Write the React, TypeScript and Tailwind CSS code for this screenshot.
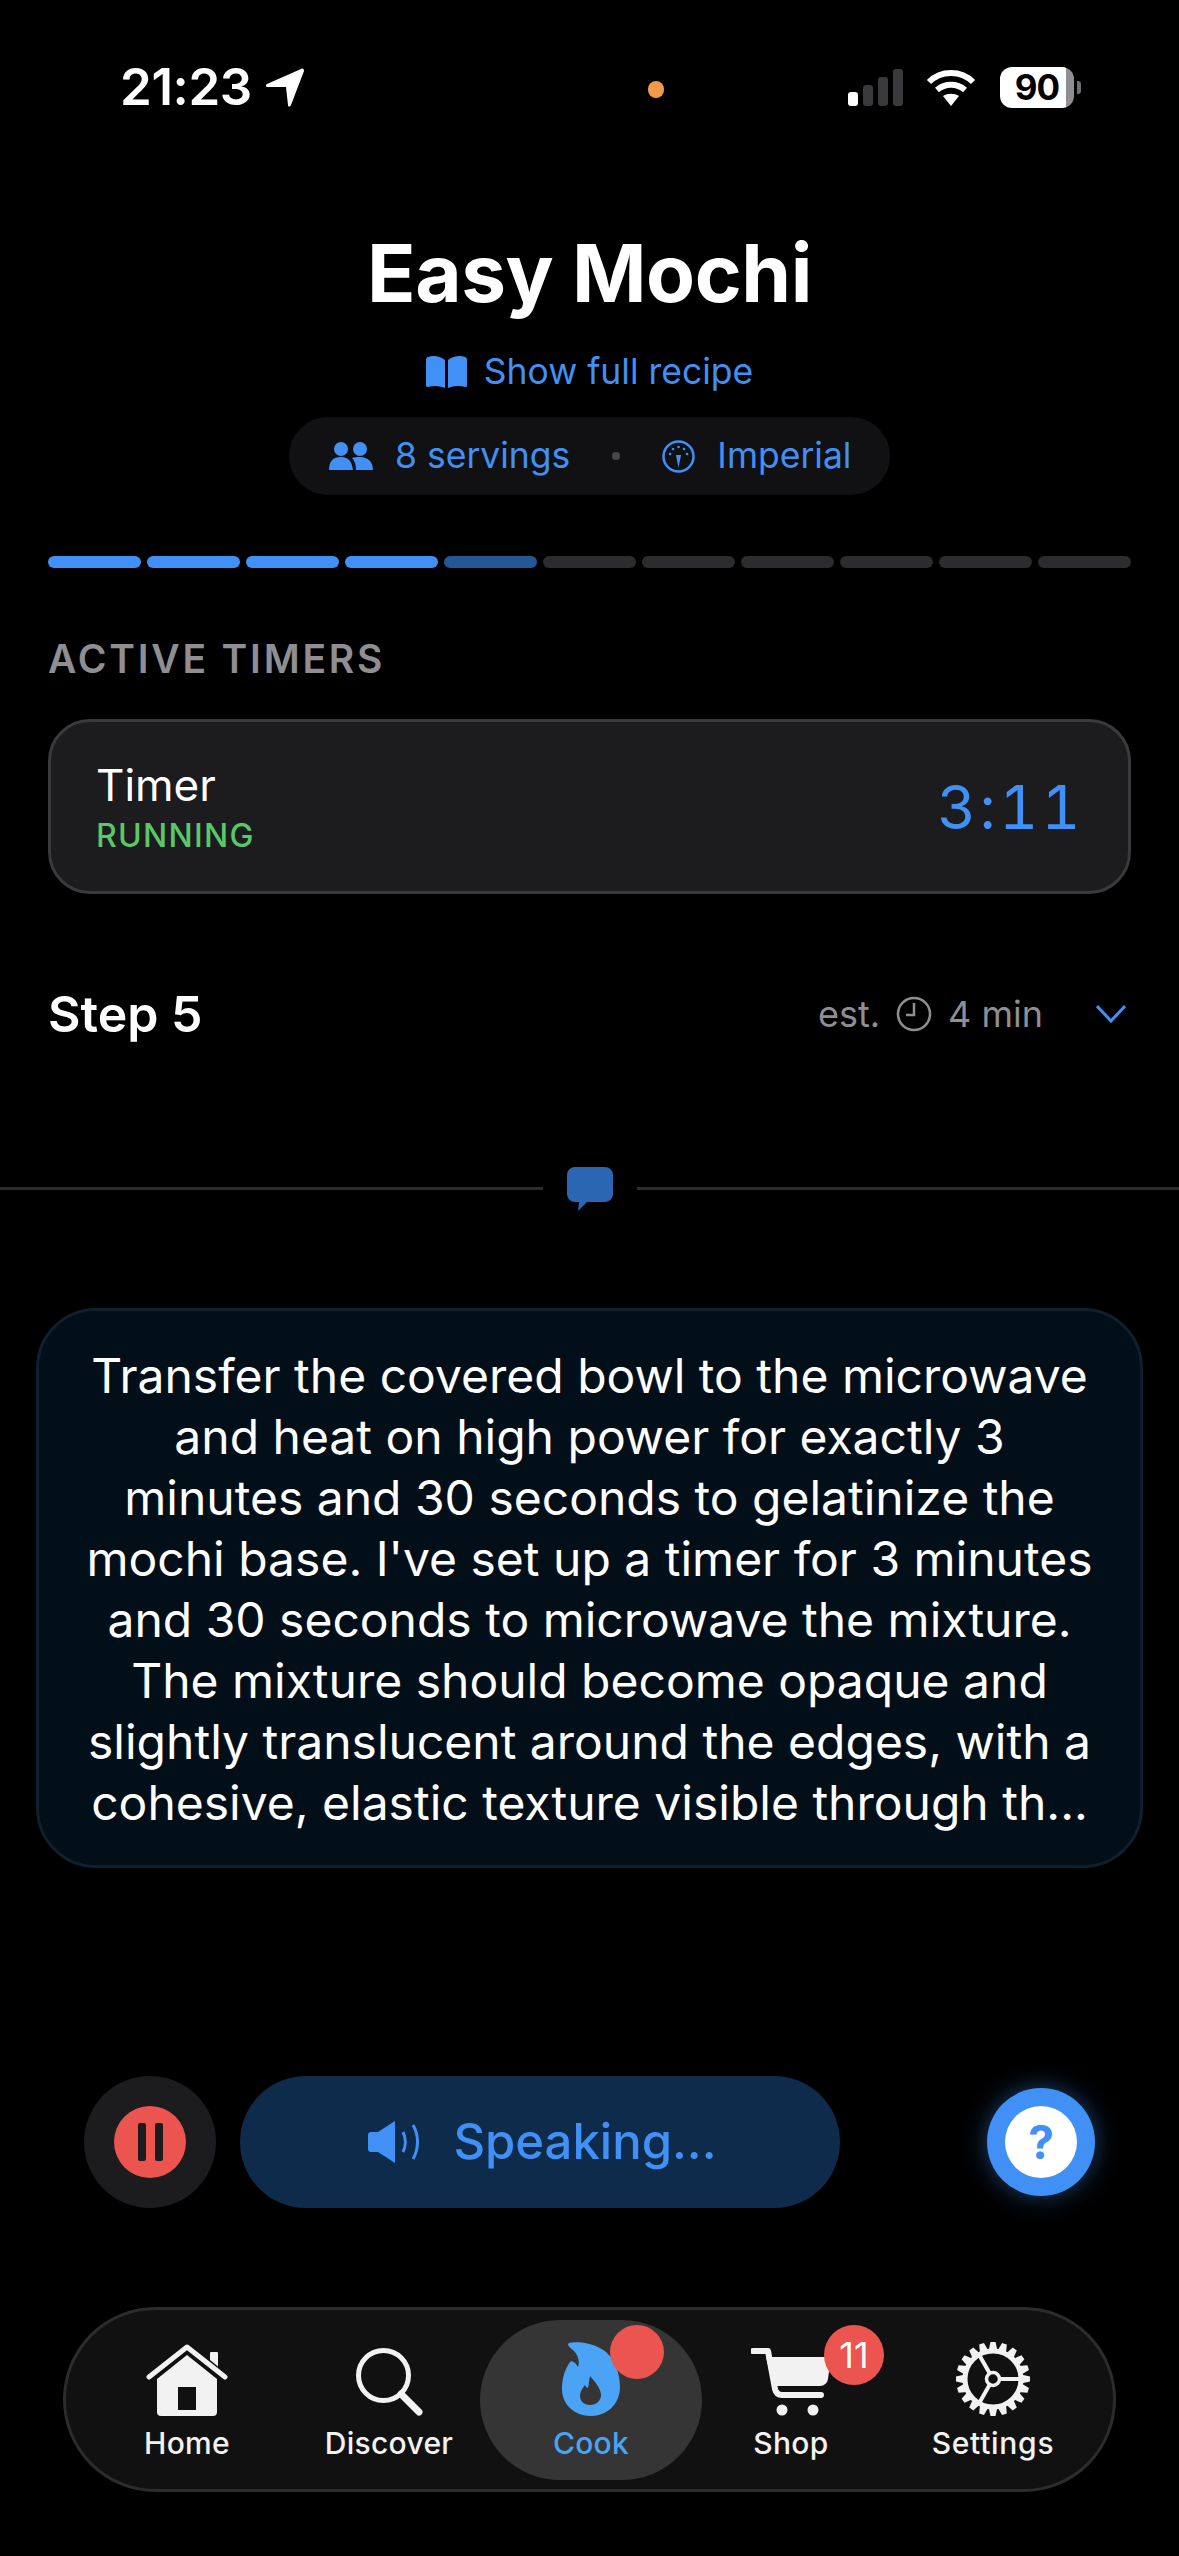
const inter = "font-['Inter',sans-serif]";

const tabs = ["Home", "Discover", "Cook", "Shop", "Settings"];

function HomeIcon() {
  return (
    <svg viewBox="0 0 82 72" className="h-[72px] w-[82px]" fill="#f2f2f2">
      <rect x="64" y="8" width="8" height="19" rx="1" />
      <path
        fillRule="evenodd"
        d="M41 11 71 35v33a4 4 0 0 1-4 4H15a4 4 0 0 1-4-4V35zM32 43v23h18V43z"
      />
      <path d="M3 34 41 3l38 31" fill="none" stroke="#111111" strokeWidth="9" strokeLinecap="round" strokeLinejoin="round" />
      <path d="M3 33 41 3l38 30" fill="none" stroke="#f2f2f2" strokeWidth="5" strokeLinecap="round" strokeLinejoin="round" />
    </svg>
  );
}

function SearchIcon() {
  return (
    <svg viewBox="0 0 67 68" className="h-[68px] w-[67px]" fill="none" stroke="#f2f2f2" strokeLinecap="round">
      <circle cx="27.5" cy="27.5" r="25" strokeWidth="5" />
      <path d="m45 46 18 18" strokeWidth="7" />
    </svg>
  );
}

function FlameIcon() {
  return (
    <svg viewBox="0 0 58 74" className="h-[74px] w-[58px]" fill="#4ba3f5">
      <path
        fillRule="evenodd"
        d="M7 1C14-1 32 0 44 10c9 8 14 22 14 35 0 17-13 29-29 29C12 74 0 62 0 47c0-11 3-20 8-27 2-2 5 0 8 5 2-5 0-12-4-16C9 6 4 3 7 1Zm21 33c-1 4-1 8-2 12-1 0-2-1-3-3-3 4-5 7-5 11 0 5 4 9 10 9s11-4 11-10c0-7-7-14-11-19Z"
      />
    </svg>
  );
}

function CartIcon() {
  return (
    <svg viewBox="0 0 80 68" className="h-[68px] w-[80px]" fill="#f2f2f2">
      <path d="M2 3h15l7 38c1 4 3 6 7 6h39" fill="none" stroke="#f2f2f2" strokeWidth="6" strokeLinecap="round" strokeLinejoin="round" />
      <path d="M15 9h65l-3 22a8 8 0 0 1-8 7H22z" />
      <circle cx="31" cy="62" r="5.5" />
      <circle cx="62" cy="62" r="5.5" />
    </svg>
  );
}

function GearIcon() {
  const teeth = Array.from({ length: 20 }, (_, i) => i * 18);
  return (
    <svg viewBox="0 0 74 74" className="h-[74px] w-[74px]" fill="none" stroke="#f2f2f2">
      <circle cx="37" cy="37" r="28" strokeWidth="5" />
      {teeth.map((deg) => (
        <path key={deg} d="M34.5 0h5l2 9h-9z" fill="#f2f2f2" stroke="none" transform={`rotate(${deg} 37 37)`} />
      ))}
      <circle cx="37" cy="37" r="6.5" strokeWidth="3.5" />
      <path d="M44 37h21M33.5 31 23.5 13.5M33.5 43l-10 17.500" strokeWidth="4" />
    </svg>
  );
}

function TabIcon({ label }: { label: string }) {
  if (label === "Home") return <HomeIcon />;
  if (label === "Discover") return <SearchIcon />;
  if (label === "Cook") return <FlameIcon />;
  if (label === "Shop") return <CartIcon />;
  return <GearIcon />;
}

function StatusBar() {
  return (
    <div className="flex h-[108px] items-start pl-[120px] pt-[66px]">
      <div className="flex items-center gap-[14px]">
        <span className="text-[51px] leading-[42px] font-semibold tracking-[-0.4px] text-white">21:23</span>
        <svg viewBox="0 0 38 39" className="h-[39px] w-[38px]" fill="#fff">
          <path d="M35 1c2-1 3 0 3 2L25 37c-1 2-3 2-3 0l-2-18H2c-2 0-3-2-1-3z" />
        </svg>
      </div>
      <div className="ml-[344px] mt-[15px] h-[17px] w-[16px] rounded-full bg-[#f19a49]" />
      <div className="ml-[184px] mt-[1px] flex h-[41px] items-center">
        <div className="flex items-end gap-[5px]">
          <div className="h-[14px] w-[10px] rounded-[3px] bg-white" />
          <div className="h-[21px] w-[10px] rounded-[3px] bg-[#3a3a3c]" />
          <div className="h-[29px] w-[10px] rounded-[3px] bg-[#3a3a3c]" />
          <div className="h-[37px] w-[10px] rounded-[3px] bg-[#3a3a3c]" />
        </div>
        <svg viewBox="0 0 50 37" className="ml-[23px] h-[37px] w-[50px]" fill="none" stroke="#fff" strokeWidth="6">
          <path d="M3 13c12-12 32-12 44 0M11 21c8-7 20-7 28 0" />
          <path d="M17 27c5-3 11-3 16 0l-8 10z" fill="#fff" stroke="none" />
        </svg>
        <div className="ml-[24px] flex h-[41px] w-[74px] items-center justify-center rounded-[12px] bg-[linear-gradient(90deg,#fff_89%,#8e8e93_89%)] text-[35px] font-bold tracking-[-1px] text-black">
          90
        </div>
        <div className="ml-[3px] h-[13px] w-[4px] rounded-r-[3px] bg-[#6e6e73]" />
      </div>
    </div>
  );
}

export default function App() {
  return (
    <div className={`${inter} flex h-[2556px] w-[1179px] flex-col overflow-hidden bg-black`}>
      <StatusBar />

      {/* recipe header */}
      <div className="mt-[118px] flex flex-col items-center">
        <h1 className="text-[80px] leading-[94px] font-bold tracking-[-0.4px] text-white">Easy Mochi</h1>
        <div className="mt-[28px] flex items-center gap-[17px] text-[#4090f5]">
          <svg viewBox="0 0 41 32" className="h-[32px] w-[41px]" fill="#4090f5">
            <path d="M19 4C14 0 7-1 2 1 1 1 0 2 0 4v25c0 2 1 2 2 2 6-2 12-1 17 1zM22 4c5-4 12-5 17-3 1 0 2 1 2 3v25c0 2-1 2-2 2-6-2-12-1-17 1z" />
          </svg>
          <span className="text-[35.500px] leading-[48px]">Show full recipe</span>
        </div>
        <div className="mt-[21px] flex h-[78px] w-[601px] items-center rounded-full bg-[#111113] pl-[40px] text-[35.500px] text-[#4090f5]">
          <svg viewBox="0 0 44 28" className="h-[28px] w-[44px]" fill="#4090f5">
            <circle cx="12" cy="7" r="7" />
            <circle cx="31" cy="7" r="7" />
            <path d="M0 28c0-9 4-13 12-13s11 5 12 13zM27 28c0-5-1-9-4-12 2-1 5-1 8-1 8 0 13 5 13 13z" />
          </svg>
          <span className="ml-[22px]">8 servings</span>
          <div className="ml-[42px] h-[8px] w-[8px] rounded-full bg-[#48484a]" />
          <svg viewBox="0 0 33 33" className="ml-[42px] h-[33px] w-[33px]" fill="none" stroke="#4090f5" strokeWidth="2.500">
            <circle cx="16.500" cy="16.500" r="15" />
            <path d="M14 15h5l-2.500 13z" fill="#4090f5" stroke="none" />
            <path d="M8 14h.1M11 9h.1M16.500 7h.1M22 9h.1M25 14h.1" strokeLinecap="round" />
          </svg>
          <span className="ml-[22px]">Imperial</span>
        </div>
      </div>

      {/* step progress */}
      <div className="mt-[61px] flex gap-[6px] px-[48px]">
        {Array.from({ length: 11 }, (_, i) => (
          <div
            key={i}
            className={`h-[12px] flex-1 rounded-full ${i < 4 ? "bg-[#4090f5]" : i === 4 ? "bg-[#235796]" : "bg-[#2c2c2e]"}`}
          />
        ))}
      </div>

      {/* timers */}
      <div className="mt-[67px] px-[48px] text-[39px] leading-[48px] font-semibold tracking-[2.800px] text-[#8e8e93]">ACTIVE TIMERS</div>
      <div className="mx-[48px] mt-[36px] flex h-[175px] items-center justify-between rounded-[42px] border-[3px] border-[#3a3a3c] bg-[#1c1c1e] pl-[45px] pr-[44px]">
        <div className="flex flex-col">
          <span className="text-[44px] leading-[54px] text-white">Timer</span>
          <span className="mt-[4px] text-[32px] leading-[40px] font-medium tracking-[1.300px] text-[#5ac868]">RUNNING</span>
        </div>
        <span className="text-[60px] leading-[72px] tabular-nums tracking-[3.500px] text-[#4090f5]">3:11</span>
      </div>

      {/* step row */}
      <div className="mt-[89px] flex items-center pl-[48px] pr-[53px]">
        <span className="text-[50px] leading-[62px] font-semibold text-white">Step 5</span>
        <div className="ml-auto flex items-center gap-[16px] text-[36px] text-[#8e8e93]">
          <span>est.</span>
          <svg viewBox="0 0 36 36" className="h-[36px] w-[36px]" fill="none" stroke="#8e8e93" strokeWidth="2.500">
            <circle cx="18" cy="18" r="16" />
            <path d="M18 7v12h-8" />
          </svg>
          <span>4 min</span>
        </div>
        <svg viewBox="0 0 30 18" className="ml-[53px] h-[18px] w-[30px]" fill="none" stroke="#4090f5" strokeWidth="3">
          <path d="m1 1 14 15L29 1" />
        </svg>
      </div>

      {/* speech divider */}
      <div className="mt-[122px] flex items-center">
        <div className="mb-[2px] h-[3px] flex-1 bg-[#2c2c2e]" />
        <svg viewBox="0 0 46 44" className="mx-[24px] h-[44px] w-[46px]" fill="#2a66b2">
          <path d="M8 0h30a8 8 0 0 1 8 8v19a8 8 0 0 1-8 8H20l-9 9 1-9H8a8 8 0 0 1-8-8V8a8 8 0 0 1 8-8z" />
        </svg>
        <div className="mb-[2px] h-[3px] flex-1 bg-[#2c2c2e]" />
      </div>

      {/* instruction bubble */}
      <div className="mx-[36px] mt-[97px] rounded-[60px] border-[3px] border-[#0e1f2e] bg-[#030f18] px-[44px] pb-[32px] pt-[34px] text-center text-[48px] leading-[61px] text-white">
        Transfer the covered bowl to the microwave and heat on high power for exactly 3 minutes and 30 seconds to gelatinize the mochi base. I've set up a timer for 3 minutes and 30 seconds to microwave the mixture. The mixture should become opaque and slightly translucent around the edges, with a cohesive, elastic texture visible through th...
      </div>

      {/* voice controls */}
      <div className="mt-[208px] flex items-center pl-[84px] pr-[84px]">
        <div className="flex h-[132px] w-[132px] items-center justify-center rounded-full bg-[#1c1c1e]">
          <div className="flex h-[72px] w-[72px] items-center justify-center gap-[9px] rounded-full bg-[#ec5450]">
            <div className="h-[38px] w-[8px] rounded-[2px] bg-[#1c1c1e]" />
            <div className="h-[38px] w-[8px] rounded-[2px] bg-[#1c1c1e]" />
          </div>
        </div>
        <div className="ml-[24px] flex h-[132px] w-[600px] items-center justify-center gap-[33px] rounded-full bg-[#0f2b4b] pl-[5px] text-[49px] font-medium text-[#4090f5]">
          <svg viewBox="0 0 52 42" className="h-[42px] w-[52px]" fill="#4090f5">
            <path d="M0 14q0-3 3-3h7L27 0v42L10 31H3q-3 0-3-3z" />
            <path d="M35 11c3 6 3 14 0 20M45 4c6 10 6 24 0 34" fill="none" stroke="#4090f5" strokeWidth="3" />
          </svg>
          <span>Speaking...</span>
        </div>
        <div className="ml-auto flex h-[108px] w-[108px] items-center justify-center rounded-full bg-[#4090f5] shadow-[0_0_24px_rgba(64,144,245,0.45)]">
          <div className="flex h-[72px] w-[72px] items-center justify-center rounded-full bg-white text-[46px] font-bold text-[#4090f5]">?</div>
        </div>
      </div>

      {/* tab bar */}
      <div className="mx-[63px] mt-[99px] flex h-[185px] items-center rounded-full border-[3px] border-[#2c2c2e] bg-[#111111] pl-[20px]">
        {tabs.map((label) => (
          <div
            key={label}
            className={`relative flex h-[160px] flex-col items-center rounded-full pt-[20px] ${label === "Cook" ? "ml-[-10px] mr-[-12px] w-[222px] bg-[#353535] text-[#4ba3f5]" : "w-[202px] text-[#f2f2f2]"}`}
          >
            <div className="flex h-[76px] items-end">
              <TabIcon label={label} />
            </div>
            <span className={`mt-[9px] text-[30px] leading-[36px] font-medium ${label === "Settings" ? "tracking-[0.7px]" : "tracking-[0.3px]"}`}>{label}</span>
            {label === "Cook" && <div className="absolute left-[130px] top-[5px] h-[54px] w-[54px] rounded-full bg-[#ec5450]" />}
            {label === "Shop" && (
              <div className="absolute left-[134px] top-[5px] flex h-[60px] w-[60px] items-center justify-center rounded-full bg-[#ec5450] text-[36px] text-white">11</div>
            )}
          </div>
        ))}
      </div>
    </div>
  );
}
